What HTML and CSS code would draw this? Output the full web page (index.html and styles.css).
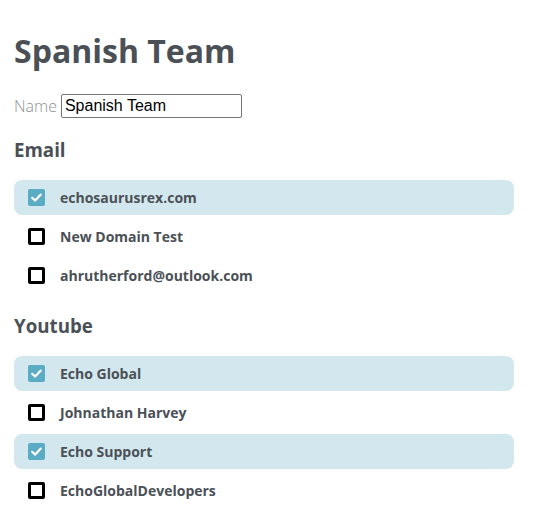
FILE: index.html
```html
<!DOCTYPE html>
<html>
<head>
<meta charset="utf-8">
<link rel="stylesheet" href="styles.css">
</head>
<body>
<div class="page">
  <h1 class="title">Spanish Team</h1>
  <div class="name-row">
    <label class="name-label" for="team-name">Name</label>
    <input id="team-name" class="name-input" type="text" value="Spanish Team">
  </div>

  <h3 class="section">Email</h3>
  <ul class="list">
    <li class="item checked"><span class="box"><svg viewBox="0 0 17 17" width="17" height="17"><path d="M4.2 8.8 L7.2 11.6 L12.8 5.6" fill="none" stroke="#fff" stroke-width="2.2" stroke-linecap="round" stroke-linejoin="round"/></svg></span><span class="label">echosaurusrex.com</span></li>
    <li class="item"><span class="box"></span><span class="label">New Domain Test</span></li>
    <li class="item"><span class="box"></span><span class="label">ahrutherford@outlook.com</span></li>
  </ul>

  <h3 class="section">Youtube</h3>
  <ul class="list">
    <li class="item checked"><span class="box"><svg viewBox="0 0 17 17" width="17" height="17"><path d="M4.2 8.8 L7.2 11.6 L12.8 5.6" fill="none" stroke="#fff" stroke-width="2.2" stroke-linecap="round" stroke-linejoin="round"/></svg></span><span class="label">Echo Global</span></li>
    <li class="item"><span class="box"></span><span class="label">Johnathan Harvey</span></li>
    <li class="item checked"><span class="box"><svg viewBox="0 0 17 17" width="17" height="17"><path d="M4.2 8.8 L7.2 11.6 L12.8 5.6" fill="none" stroke="#fff" stroke-width="2.2" stroke-linecap="round" stroke-linejoin="round"/></svg></span><span class="label">Echo Support</span></li>
    <li class="item"><span class="box"></span><span class="label">EchoGlobalDevelopers</span></li>
  </ul>
</div>
</body>
</html>
```

FILE: styles.css
```css
html, body {
  margin: 0;
  padding: 0;
  background: #fff;
}

.page {
  padding: 8px 14px;
  width: 500px;
  font-family: "Open Sans", sans-serif;
  color: #4a5056;
}

.title {
  font-size: 32px;
  font-weight: 700;
  margin: 21.44px 0 21px;
  line-height: 43.6px;
}

.name-row {
  display: flex;
  align-items: center;
  height: 24px;
  gap: 4px;
}

.name-label {
  font-size: 16px;
  font-weight: 300;
  color: #8f9295;
}

.name-input {
  box-sizing: border-box;
  width: 181px;
  height: 24px;
  margin: 0;
  padding: 0 3px;
  border: 1px solid #767676;
  border-radius: 2px;
  font-family: "Liberation Sans", Arial, sans-serif;
  font-size: 16px;
  color: #000;
}

.section {
  font-size: 18.72px;
  font-weight: 700;
  margin: 18.5px 0 17.8px;
  line-height: 25.5px;
}

.list {
  list-style: none;
  margin: 0;
  padding: 0 0 1.5px;
  display: flex;
  flex-direction: column;
  gap: 4px;
}

.item {
  display: flex;
  align-items: center;
  height: 35px;
  padding-left: 14px;
  border-radius: 8px;
}

.item.checked {
  background: #d3e8ee;
}

.box {
  box-sizing: border-box;
  width: 17px;
  height: 17px;
  border: 3px solid #000;
  border-radius: 2px;
  background: #fff;
  flex: none;
  display: flex;
}

.item.checked .box {
  border: none;
  background: #5aabc4;
}

.label {
  margin-left: 15px;
  font-size: 14px;
  font-weight: 700;
}
```
